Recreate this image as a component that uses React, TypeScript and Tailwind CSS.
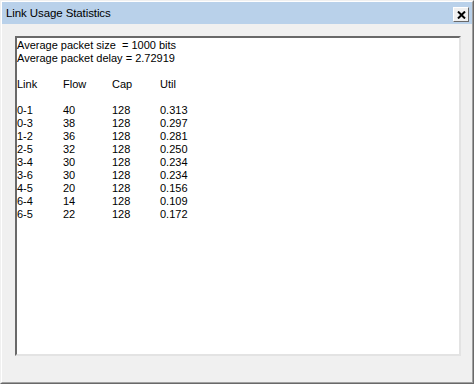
const rows: [string, string, string, string][] = [
  ["0-1", "40", "128", "0.313"],
  ["0-3", "38", "128", "0.297"],
  ["1-2", "36", "128", "0.281"],
  ["2-5", "32", "128", "0.250"],
  ["3-4", "30", "128", "0.234"],
  ["3-6", "30", "128", "0.234"],
  ["4-5", "20", "128", "0.156"],
  ["6-4", "14", "128", "0.109"],
  ["6-5", "22", "128", "0.172"],
];

export default function App() {
  return (
    <div className="w-[474px] h-[384px] border border-t-[#f0f0f0] border-l-[#f0f0f0] border-r-[#696969] border-b-[#696969] font-['Liberation_Sans',sans-serif] text-black">
      <div className="h-full flex flex-col bg-[#f0f0f0] border border-t-white border-l-white border-r-[#a0a0a0] border-b-[#a0a0a0]">
        <div className="h-[22px] shrink-0 bg-[#b9d1ea] flex items-center pl-[4px] pr-[3px]">
          <span className="text-[11.5px] leading-none pt-[1px] tracking-[-0.1px]">Link Usage Statistics</span>
          <div className="ml-auto mt-[3px] w-[16px] h-[15px] bg-[#f0f0f0] border border-t-white border-l-white border-r-[#696969] border-b-[#696969] flex items-center justify-center">
            <svg width="9" height="8" viewBox="0 0 9 8">
              <path d="M1 0.5 L8 7.5 M8 0.5 L1 7.5" stroke="black" strokeWidth="2" />
            </svg>
          </div>
        </div>
        <div className="flex-1 pt-[12px] pl-[13px] pr-[11px] pb-[26px] flex">
          <div className="flex-1 bg-white border-2 border-t-[#696969] border-l-[#696969] border-r-[#e3e3e3] border-b-[#e3e3e3] pt-[1px] text-[11px] leading-[13px]">
            <div className="whitespace-pre">Average packet size  = 1000 bits</div>
            <div className="whitespace-pre">Average packet delay = 2.72919</div>
            <div className="h-[13px]" />
            <div className="grid grid-cols-[46px_49px_48px_auto]">
              <span>Link</span>
              <span>Flow</span>
              <span>Cap</span>
              <span>Util</span>
            </div>
            <div className="h-[13px]" />
            {rows.map((r) => (
              <div key={r[0]} className="grid grid-cols-[46px_49px_48px_auto]">
                <span>{r[0]}</span>
                <span>{r[1]}</span>
                <span>{r[2]}</span>
                <span>{r[3]}</span>
              </div>
            ))}
          </div>
        </div>
      </div>
    </div>
  );
}
